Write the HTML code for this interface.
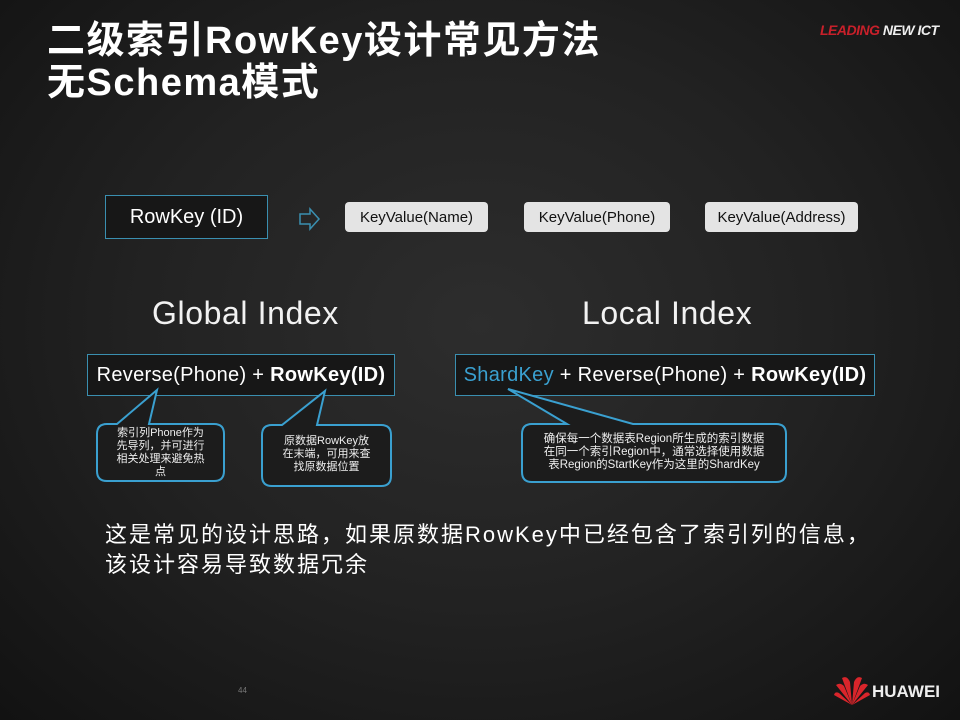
<!DOCTYPE html><html><head><meta charset="utf-8"><style>
body{margin:0;width:960px;height:720px;overflow:hidden;background:radial-gradient(ellipse at 50% 45%,#2d2d2d 0%,#222 50%,#121212 100%);font-family:"Liberation Sans","Noto Sans CJK SC",sans-serif;color:#fff;position:relative}
.a{position:absolute;white-space:nowrap}
.t{left:47px;font-size:38px;font-weight:bold;line-height:42px;letter-spacing:1.5px}
.kv{top:202px;height:30px;background:#e4e4e4;border-radius:4px;color:#111;font-size:15px;line-height:31px;text-align:center}
.box{border:1px solid #3a8fb0;background:#171717}
.big{font-size:32px;color:#f2f2f2;letter-spacing:0.6px}
.mid{font-size:20px;letter-spacing:0.3px}
.c{font-size:11px;line-height:13px;text-align:center;color:#eee}
</style></head><body>
<div class="a t" style="top:20px">二级索引RowKey设计常见方法</div>
<div class="a t" style="top:62px">无Schema模式</div>
<div class="a" style="left:820px;top:22px;font-size:14px;font-weight:bold;font-style:italic;letter-spacing:-0.5px"><span style="color:#c8202a">LEADING</span> <span style="color:#eee">NEW ICT</span></div>
<div class="a box" style="left:105px;top:195px;width:161px;height:42px;font-size:20px;line-height:42px;text-align:center">RowKey (ID)</div>
<svg class="a" style="left:298px;top:207px" width="24" height="24"><path d="M2 7H12V2L21 12L12 22V17H2Z" fill="none" stroke="#3a8fb0" stroke-width="1.5"/></svg>
<div class="a kv" style="left:345px;width:143px">KeyValue(Name)</div>
<div class="a kv" style="left:524px;width:146px">KeyValue(Phone)</div>
<div class="a kv" style="left:705px;width:153px">KeyValue(Address)</div>
<div class="a big" style="left:152px;top:295px">Global Index</div>
<div class="a big" style="left:582px;top:295px">Local Index</div>
<div class="a box mid" style="left:87px;top:354px;width:306px;height:40px;line-height:40px;text-align:center">Reverse(Phone) + <b>RowKey(ID)</b></div>
<div class="a box mid" style="left:455px;top:354px;width:418px;height:40px;line-height:40px;text-align:center"><span style="color:#3aa0d0">ShardKey</span> + Reverse(Phone) + <b>RowKey(ID)</b></div>
<svg class="a" style="left:0;top:0" width="960" height="720">
<g fill="#1c1c1c" stroke="#3aa0d0" stroke-width="2">
<path d="M107 424H117L157 390L149 424H214Q224 424 224 434V471Q224 481 214 481H107Q97 481 97 471V434Q97 424 107 424Z"/>
<path d="M272 425H282L325 391L317 425H381Q391 425 391 435V476Q391 486 381 486H272Q262 486 262 476V435Q262 425 272 425Z"/>
<path d="M532 424H567L508 389L633 424H776Q786 424 786 434V472Q786 482 776 482H532Q522 482 522 472V434Q522 424 532 424Z"/>
</g></svg>
<div class="a c" style="left:97px;top:427px;width:127px">索引列Phone作为<br>先导列，并可进行<br>相关处理来避免热<br>点</div>
<div class="a c" style="left:262px;top:435px;width:129px">原数据RowKey放<br>在末端，可用来查<br>找原数据位置</div>
<div class="a c" style="left:522px;top:433px;width:264px;font-size:11.5px">确保每一个数据表Region所生成的索引数据<br>在同一个索引Region中，通常选择使用数据<br>表Region的StartKey作为这里的ShardKey</div>
<div class="a" style="left:105px;top:520px;font-size:22px;line-height:30px;letter-spacing:2px">这是常见的设计思路，如果原数据RowKey中已经包含了索引列的信息，<br>该设计容易导致数据冗余</div>
<div class="a" style="left:238px;top:686px;font-size:8px;color:#777">44</div>
<svg class="a" style="left:834px;top:674px" width="36" height="32"><g fill="#d9252b"><path d="M18 31L8 4Q13 1 16 8Z"/><path d="M18 31L20 8Q23 1 28 4Z"/><path d="M18 31L2 11Q6 8 10 12Z"/><path d="M18 31L26 12Q30 8 34 11Z"/><path d="M18 31L0 21Q1 17 5 19Z"/><path d="M18 31L31 19Q35 17 36 21Z"/></g></svg>
<div class="a" style="left:872px;top:682px;font-size:17px;font-weight:bold;color:#eee">HUAWEI</div>
</body></html>
